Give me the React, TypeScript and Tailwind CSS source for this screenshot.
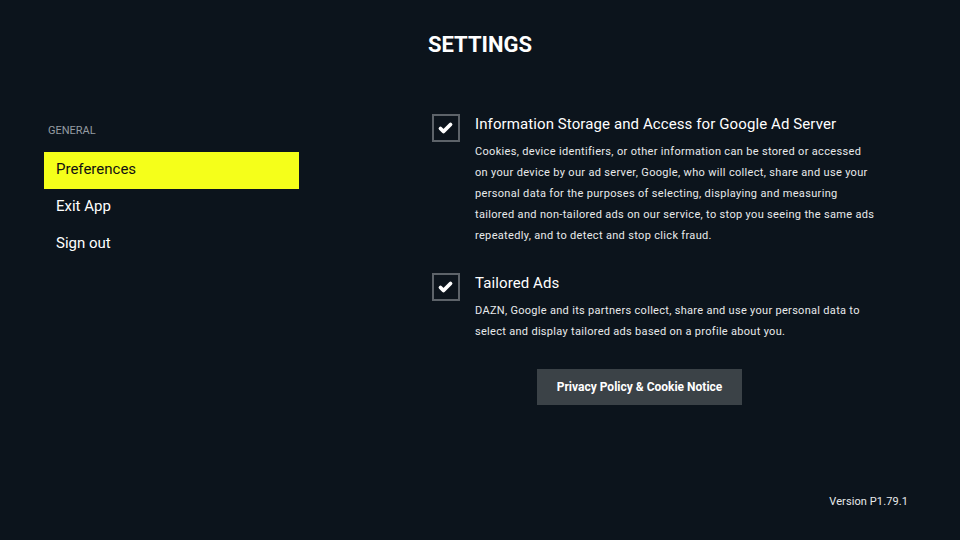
import React from "react";

function Check() {
  return (
    <div className="w-[28px] h-[28px] shrink-0 border-2 border-[#5d6369] flex items-center justify-center">
      <svg width="24" height="24" viewBox="0 0 24 24">
        <polyline points="6.5,12.5 9.5,15.5 16.5,8.5" fill="none" stroke="#ffffff" strokeWidth="3.8" strokeLinecap="round" strokeLinejoin="round" />
      </svg>
    </div>
  );
}

export default function App() {
  const font = { fontFamily: "Roboto, 'Noto Sans', sans-serif" };
  return (
    <div className="w-[960px] h-[540px] bg-[#0c141c] text-white flex flex-col overflow-hidden" style={font}>
      <div className="pt-[32px] text-center text-[22px] leading-[26px] font-bold">SETTINGS</div>
      <div className="flex mt-[56px]">
        <div className="ml-[44px] w-[255px] flex flex-col">
          <div className="mt-[10px] pl-[4px] text-[11px] leading-[14px] text-[#959ca2]">GENERAL</div>
          <div className="mt-[14px] flex flex-col">
            <div className="h-[37px] bg-[#f5ff1a] text-[#111] text-[15px] flex items-center pl-[12px] pb-[3px]">Preferences</div>
            <div className="h-[37px] text-[15px] flex items-center pl-[12px] pb-[3px]">Exit App</div>
            <div className="h-[37px] text-[15px] flex items-center pl-[12px] pb-[3px]">Sign out</div>
          </div>
        </div>
        <div className="ml-[133px] flex flex-col">
          <div className="flex gap-[15px]">
            <Check />
            <div className="flex flex-col">
              <div className="text-[15px] leading-[20px] tracking-[0.1px]">Information Storage and Access for Google Ad Server</div>
              <div className="mt-[7px] text-[11px] leading-[21px] tracking-[0.33px] text-[#e8eaeb] whitespace-nowrap">
                <div>Cookies, device identifiers, or other information can be stored or accessed</div>
                <div>on your device by our ad server, Google, who will collect, share and use your</div>
                <div>personal data for the purposes of selecting, displaying and measuring</div>
                <div>tailored and non-tailored ads on our service, to stop you seeing the same ads</div>
                <div>repeatedly, and to detect and stop click fraud.</div>
              </div>
            </div>
          </div>
          <div className="flex gap-[15px] mt-[27px]">
            <Check />
            <div className="flex flex-col">
              <div className="text-[15px] leading-[20px] tracking-[0.1px]">Tailored Ads</div>
              <div className="mt-[7px] text-[11px] leading-[21px] tracking-[0.3px] text-[#e8eaeb] whitespace-nowrap">
                <div>DAZN, Google and its partners collect, share and use your personal data to</div>
                <div>select and display tailored ads based on a profile about you.</div>
              </div>
            </div>
          </div>
          <div className="mt-[27px] ml-[105px] w-[205px] h-[36px] bg-[#3b4247] flex items-center justify-center text-[12px] font-bold">
            Privacy Policy &amp; Cookie Notice
          </div>
        </div>
      </div>
      <div className="mt-auto self-end pr-[52px] pb-[31px] text-[11px] leading-[14px] tracking-[0.1px] text-[#e8eaeb]">Version P1.79.1</div>
    </div>
  );
}
